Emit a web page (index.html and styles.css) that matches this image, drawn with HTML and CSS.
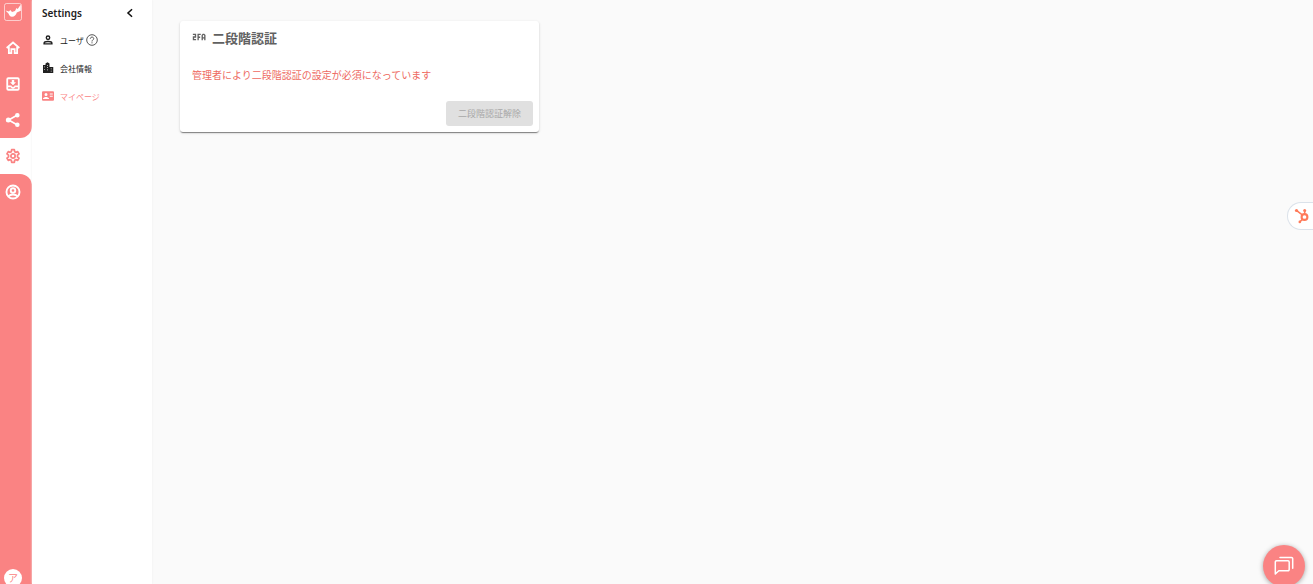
FILE: index.html
```html
<!DOCTYPE html>
<html lang="ja">
<head>
<meta charset="utf-8">
<meta name="viewport" content="width=device-width, initial-scale=1">
<title>Settings</title>
<link rel="stylesheet" href="styles.css">
</head>
<body>
<div class="app">
  <nav class="rail" aria-label="メイン">
    <div class="rail-top">
      <a class="brand" href="#" aria-label="トップ">
        <svg width="18" height="18" viewBox="0 0 18 18"><rect x=".5" y=".5" width="17" height="17" rx="2" fill="none" stroke="#fff" stroke-opacity=".6"/><path d="M1.500 7.500 5 8.600l1.300-1.600 1.700 2 3-1L12.500 5l1.200 1L16.800 1.500V7.800L12.800 9.500C12 12 10.500 13.800 8 13.800 6 13.600 5.200 12 4.500 10.400Z" fill="#fff"/></svg>
      </a>
      <a class="rail-item" href="#" aria-label="ホーム">
        <svg width="16" height="16" viewBox="0 0 24 24"><path d="M2.500 12 12 3.800 21.500 12M5.800 9.500v10.300h3.700v-6h5v6h3.700V9.500" fill="none" stroke="currentColor" stroke-width="2.700"/></svg>
      </a>
      <a class="rail-item" href="#" aria-label="受信">
        <svg width="16" height="16" viewBox="0 0 24 24"><path fill="currentColor" d="M19 2H5A3 3 0 0 0 2 5v14a3 3 0 0 0 3 3h14a3 3 0 0 0 3-3V5A3 3 0 0 0 19 2ZM19.300 19.300H4.700v-2.500h3.800c.8 1.200 2 2 3.500 2s2.700-.8 3.500-2h3.800Zm0-5h-5c0 1-.8 2-2.300 2s-2.300-1-2.300-2h-5V4.700h14.600ZM16.500 9.300h-2.700V6h-3.600v3.300H7.500l4.500 4.500Z"/></svg>
      </a>
      <a class="rail-item" href="#" aria-label="共有">
        <svg width="16" height="16" viewBox="0 0 24 24"><g fill="currentColor" stroke="currentColor" stroke-width="2.500"><path d="M18 5 5.500 12 18 19" fill="none"/><circle cx="18.500" cy="4.800" r="2.200"/><circle cx="5" cy="12" r="2.500"/><circle cx="18.500" cy="19.200" r="2.200"/></g></svg>
      </a>
    </div>
    <a class="rail-item rail-active" href="#" aria-label="設定" aria-current="page">
      <svg width="16" height="16" viewBox="0 0 24 24"><g fill="none" stroke="currentColor" stroke-width="2.600" stroke-linejoin="round"><path d="M10 2.500h4l.5 3 1.700 1 2.900-1.100 2 3.400-2.400 1.900v2.600l2.400 1.900-2 3.400-2.900-1.100-1.700 1-.5 3h-4l-.5-3-1.700-1-2.900 1.100-2-3.400 2.400-1.900v-2.600L2.900 8.800l2-3.400 2.900 1.100 1.700-1Z"/><circle cx="12" cy="12" r="3.200"/></g></svg>
    </a>
    <div class="rail-bottom">
      <a class="rail-item" href="#" aria-label="アカウント">
        <svg width="16" height="16" viewBox="0 0 24 24"><g fill="none" stroke="currentColor" stroke-width="2.800"><circle cx="12" cy="12" r="9.800"/><circle cx="12" cy="9.800" r="3.400"/><path d="M5 18.500c2-2 4.500-2.800 7-2.800s5 .8 7 2.800"/></g></svg>
      </a>
      <button class="avatar" type="button">ア</button>
    </div>
  </nav>

  <aside class="sidebar">
    <header class="sidebar-head">
      <h1 class="sidebar-title">Settings</h1>
      <button class="collapse" type="button" aria-label="閉じる">
        <svg width="14" height="14" viewBox="0 0 24 24"><path d="m15.500 5.500-7 6.500 7 6.500" fill="none" stroke="currentColor" stroke-width="2.600"/></svg>
      </button>
    </header>
    <nav class="menu" aria-label="設定">
      <a class="menu-item" href="#">
        <svg width="12" height="12" viewBox="0 0 24 24"><g fill="none" stroke="currentColor" stroke-width="2.800"><circle cx="12" cy="7.500" r="3.400"/><path d="M4.200 19.800v-1.300c0-2.200 4.500-3.400 7.800-3.400s7.800 1.200 7.800 3.400v1.300Z"/></g></svg>
        <span>ユーザ</span>
        <svg class="help" width="12" height="12" viewBox="0 0 24 24"><g fill="none" stroke="currentColor" stroke-width="1.800"><circle cx="12" cy="12" r="10.600"/><path d="M8.600 9.500c0-4.400 6.800-4.400 6.800-.3 0 2.500-3.400 2.700-3.400 5.800M12 16.500v2.200"/></g></svg>
      </a>
      <a class="menu-item" href="#">
        <svg width="12" height="12" viewBox="0 0 24 24"><path fill="currentColor" fill-rule="evenodd" d="M2 22V6h5V3l4-2.500L15 3v7h7.500v12ZM4.500 9v1.500H6V9Zm0 5v1.500H6V14Zm5.500-8v1.500h1.800V6Zm0 4.500V12h1.800v-1.500Zm0 4.500v1.500h1.800V15Zm7.500-2v1.500h1.800V13Zm0 4.500V19h1.800v-1.500Z"/></svg>
        <span>会社情報</span>
      </a>
      <a class="menu-item menu-current" href="#" aria-current="page">
        <svg width="12" height="12" viewBox="0 0 24 24"><path fill="currentColor" fill-rule="evenodd" d="M2 2.500h20a2 2 0 0 1 2 2v15a2 2 0 0 1-2 2H2a2 2 0 0 1-2-2v-15a2 2 0 0 1 2-2ZM8 6a3 3 0 1 0 0 6 3 3 0 0 0 0-6Zm-6 12h12v-1c0-2-4-3.200-6-3.200S2 15 2 17ZM15.500 7v1.800h6V7Zm0 4.500v1.800h6v-1.800Z"/></svg>
        <span>マイページ</span>
      </a>
    </nav>
  </aside>

  <main class="content">
    <section class="card">
      <h2 class="card-title">
        <svg width="14" height="14" viewBox="0 0 24 24" aria-hidden="true"><path d="M1.500 7.500H6V12H2.500v4.500H7M10.500 17.500v-10H15M10.500 12.500H14M17.500 17.500V9l1.500-1.500h1.500L22 9v8.500M17.500 13.500H22" fill="none" stroke="currentColor" stroke-width="2.300"/></svg>
        <span>二段階認証</span>
      </h2>
      <p class="card-message">管理者により二段階認証の設定が必須になっています</p>
      <div class="card-actions">
        <button class="release" type="button" disabled>二段階認証解除</button>
      </div>
    </section>
  </main>
</div>

<button class="hub-tab" type="button" aria-label="HubSpot">
  <svg width="16" height="16" viewBox="0 0 16 16"><g fill="none" stroke="#ff7a59"><circle cx="10.500" cy="9" r="2.900" stroke-width="2.100"/><path d="M10.700 6V3M8.300 6.800 3 2.800M8.500 11.200 6.100 13.600" stroke-width="1.500"/></g><g fill="#ff7a59"><circle cx="10.700" cy="2.500" r="1.500"/><circle cx="2.500" cy="2.500" r="1.600"/><circle cx="5.800" cy="13.900" r="1.300"/></g></svg>
</button>
<button class="chat" type="button" aria-label="チャット">
  <svg width="20" height="20" viewBox="0 0 20 20"><g fill="none" stroke="#fff" stroke-width="1.500" stroke-linejoin="round" stroke-linecap="round"><path d="M2.500 4.800H14a1.200 1.200 0 0 1 1.200 1.200v7.500a1.200 1.200 0 0 1-1.200 1.200H4.800L1.300 18V6a1.200 1.200 0 0 1 1.200-1.200Z"/><path d="M6 1.500h11.500a1.200 1.200 0 0 1 1.200 1.200v9.500"/></g></svg>
</button>
</body>
</html>
```

FILE: styles.css
```css
* {
  box-sizing: border-box;
}

body {
  margin: 0;
  background: #fafafa;
  color: #212121;
  font-family: "Noto Sans CJK JP", "Noto Sans", sans-serif;
}

button {
  border: 0;
  padding: 0;
  font-family: inherit;
}

svg {
  display: block;
  flex: none;
}

.app {
  display: flex;
  height: 100vh;
  overflow: hidden;
}

.rail {
  display: flex;
  flex-direction: column;
  flex: none;
  width: 32px;
  background: #fff;
}

.rail-top {
  background: #fa8383;
  border-bottom-right-radius: 12px;
}

.brand {
  display: flex;
  height: 30px;
  padding: 3px 4px;
}

.rail-item {
  display: flex;
  align-items: center;
  height: 36px;
  padding-left: 5px;
  color: #fff;
}

.rail-active {
  color: #fa8383;
}

.rail-bottom {
  display: flex;
  flex: 1;
  flex-direction: column;
  justify-content: space-between;
  background: #fa8383;
  border-top-right-radius: 12px;
}

.avatar {
  width: 18px;
  height: 18px;
  margin: 0 0 -3px 4px;
  border-radius: 50%;
  background: #fff;
  color: #fa8383;
  font-size: 10px;
  line-height: 12px;
}

.sidebar {
  flex: none;
  width: 120px;
  background: #fff;
  box-shadow: 0 0 2px #eee;
}

.sidebar-head {
  display: flex;
  align-items: center;
  justify-content: space-between;
  height: 26px;
  padding: 0 15px 0 10px;
}

.sidebar-title {
  margin: 0;
  font-family: "Noto Sans", "Noto Sans CJK JP", sans-serif;
  font-size: 10px;
  font-weight: 600;
}

.collapse {
  background: none;
  color: #111;
}

.menu-item {
  display: flex;
  align-items: center;
  gap: 6px;
  height: 28px;
  padding-left: 10px;
  color: #212121;
  font-size: 8px;
  text-decoration: none;
}

.help {
  margin-left: -4px;
  color: #444;
}

.menu-current {
  color: #fa8383;
}

.content {
  flex: 1;
  padding: 21px 28px;
}

.card {
  max-width: 359px;
  padding: 6px;
  border-radius: 3px;
  background: #fff;
  box-shadow: 0 2px 1px -1px rgba(0, 0, 0, .3), 0 1px 1px rgba(0, 0, 0, .18), 0 1px 3px rgba(0, 0, 0, .14);
}

.card-title {
  display: flex;
  align-items: center;
  gap: 6px;
  height: 20px;
  margin: 0;
  padding: 0 6px;
  color: #616161;
  font-size: 13px;
  font-weight: 700;
}

.card-message {
  margin: 20px 6px 18px;
  color: #ee6a62;
  font-size: 10px;
  line-height: 16px;
}

.card-actions {
  display: flex;
  justify-content: flex-end;
}

.release {
  height: 25px;
  padding: 0 12px;
  border-radius: 3px;
  background: #e0e0e0;
  color: #a8a8a8;
  font-size: 9px;
}

.hub-tab {
  position: fixed;
  top: 202px;
  right: 0;
  width: 26px;
  height: 28px;
  padding-left: 6px;
  border: 1px solid #dbe2ea;
  border-right: 0;
  border-radius: 14px 0 0 14px;
  background: #fff;
}

.chat {
  position: fixed;
  right: 8px;
  bottom: -3px;
  display: grid;
  place-items: center;
  width: 42px;
  height: 42px;
  border-radius: 50%;
  background: #fa8383;
  box-shadow: 0 1px 5px rgba(0, 0, 0, .35);
}
```
